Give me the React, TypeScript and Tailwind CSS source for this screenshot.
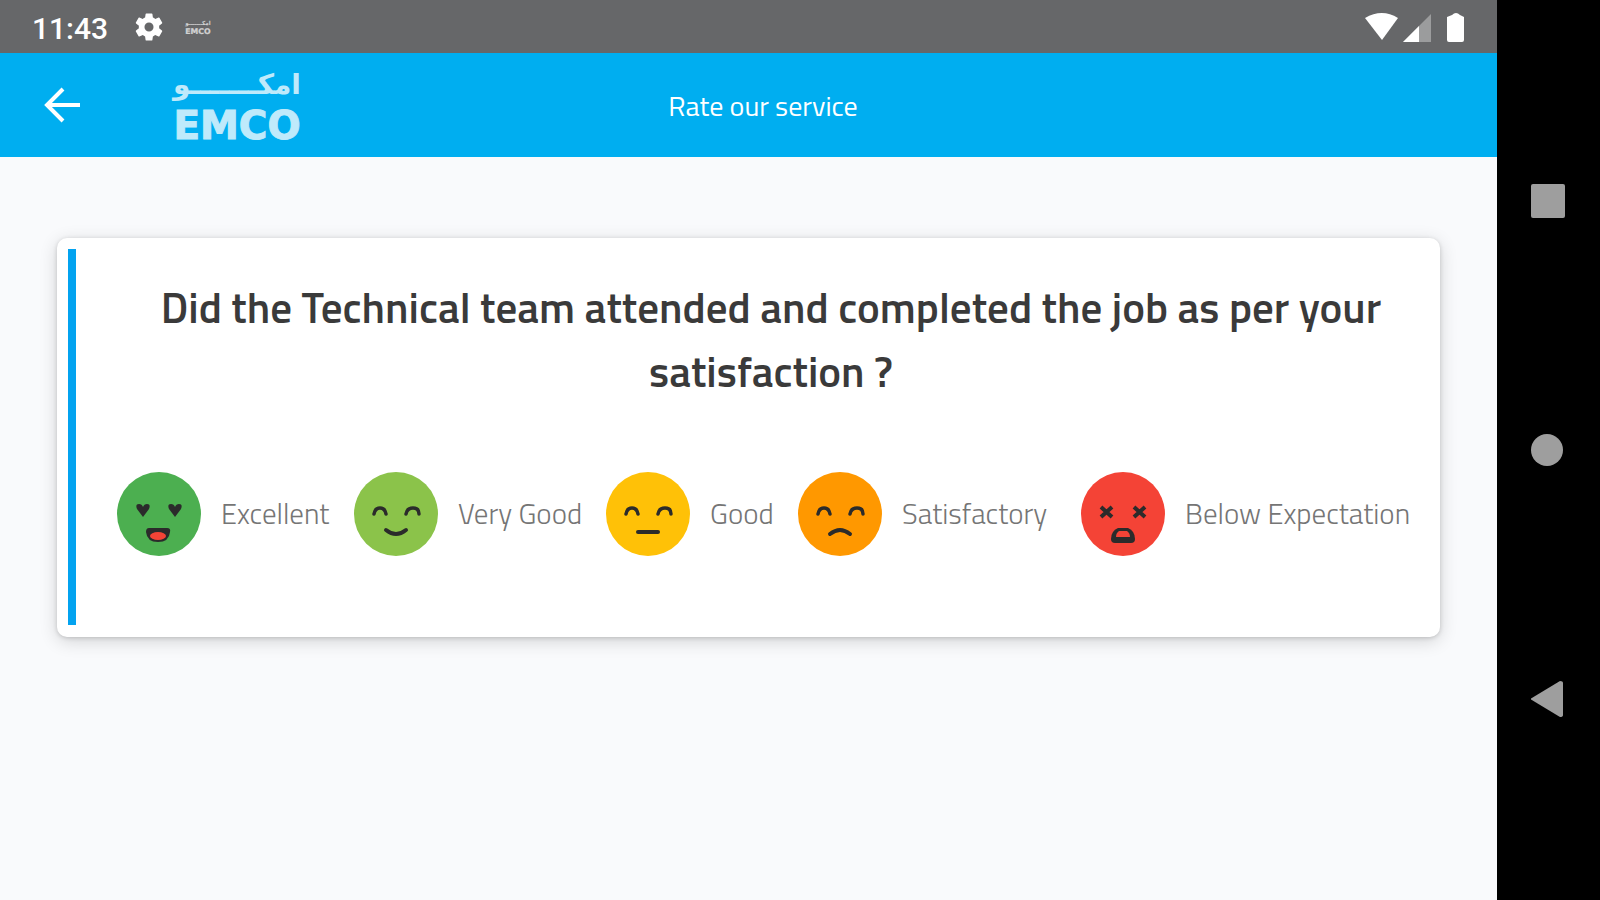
import type { ReactNode } from 'react';

const ink = '#2b2b2b';

function Logo({ className }: { className: string }) {
  return (
    <svg viewBox="0 0 136 90" className={className} role="img" aria-label="EMCO">
      <g fill="currentColor" fontWeight="700">
        <text
          x="68"
          y="34"
          textAnchor="middle"
          fontSize="28"
          fontFamily="'DejaVu Sans', sans-serif"
        >
          امكـــــــو
        </text>
        <text
          x="68"
          y="79"
          textAnchor="middle"
          fontSize="39"
          stroke="currentColor"
          fontFamily="'DejaVu Sans', sans-serif"
        >
          EMCO
        </text>
      </g>
    </svg>
  );
}

function StatusBar() {
  return (
    <div className="flex h-[53px] items-center justify-between bg-[#666769] px-[32px] text-white">
      <div className="flex items-center">
        <span className="pt-[4px] font-[Roboto] text-[30px] font-medium">11:43</span>
        <svg viewBox="0 0 24 24" className="ml-[24px] size-[34px]" fill="currentColor">
          <path d="M19.14 12.94c.04-.3.06-.61.06-.94 0-.32-.02-.64-.07-.94l2.03-1.58a.49.49 0 0 0 .12-.61l-1.92-3.32a.49.49 0 0 0-.59-.22l-2.39.96c-.5-.38-1.03-.7-1.62-.94l-.36-2.54a.48.48 0 0 0-.48-.41h-3.84c-.24 0-.43.17-.47.41l-.36 2.54c-.59.24-1.13.57-1.62.94l-2.39-.96a.48.48 0 0 0-.59.22L2.74 8.87c-.12.21-.08.47.12.61l2.03 1.58c-.05.3-.09.63-.09.94s.02.64.07.94l-2.03 1.58a.49.49 0 0 0-.12.61l1.92 3.32c.12.22.37.29.59.22l2.39-.96c.5.38 1.03.7 1.62.94l.36 2.54c.05.24.24.41.48.41h3.84c.24 0 .44-.17.47-.41l.36-2.54c.59-.24 1.13-.56 1.62-.94l2.39.96c.22.08.47 0 .59-.22l1.92-3.32a.48.48 0 0 0-.12-.61l-2.01-1.58zM12 15.2a3.2 3.2 0 1 1 0-6.4 3.2 3.2 0 0 1 0 6.4z" />
        </svg>
        <Logo className="ml-[18px] h-[18px] w-[28px] opacity-70" />
      </div>
      <svg viewBox="0 0 100 30" className="h-[30px] w-[100px]" fill="currentColor">
        <path d="M0 6Q17 -4 33 6L17 28Z" />
        <path d="M38 30L66 2V30Z" opacity="0.35" />
        <path d="M38 30L54 14V30Z" />
        <path d="M82 5L87 3Q91 -1 95 3L99 5V28Q99 30 97 30H84Q82 30 82 28Z" />
      </svg>
    </div>
  );
}

function Header() {
  return (
    <header className="grid h-[104px] grid-cols-[1fr_auto_1fr] items-center bg-[#00aef0] pl-[29px] text-white">
      <div className="flex items-center">
        <button type="button" aria-label="Back" className="ml-[14px]">
          <svg
            viewBox="0 0 38 36"
            className="h-[36px] w-[38px]"
            fill="none"
            stroke="currentColor"
            strokeWidth="4"
          >
            <path d="M20 2L4 18L20 34M4 18H37" />
          </svg>
        </button>
        <Logo className="ml-[88px] h-[90px] w-[136px] opacity-75" />
      </div>
      <h1 className="pt-[2px] text-[28px]">Rate our service</h1>
    </header>
  );
}

function Face({ color, children }: { color: string; children: ReactNode }) {
  return (
    <svg viewBox="0 0 84 84" className="size-[84px] shrink-0" aria-hidden="true">
      <circle cx="42" cy="42" r="42" fill={color} />
      <g fill="none" stroke={ink} strokeWidth="4" strokeLinecap="round">
        {children}
      </g>
    </svg>
  );
}

const happyEyes = (
  <path d="M20 42Q21 36 26 36T32 42M52 42Q53 36 59 36T65 42" strokeWidth="3.5" />
);

const options = [
  {
    label: 'Excellent',
    color: '#4caf50',
    face: (
      <>
        <g fill={ink} stroke="none">
          <path d="M26 45L20 37Q18 32 22 32Q25 32 26 35Q27 32 30 32Q34 32 32 37Z" />
          <path d="M58 45L52 37Q50 32 54 32Q57 32 58 35Q59 32 62 32Q66 32 64 37Z" />
          <path d="M32 56H50Q54 56 53 60Q52 70 41 70Q30 70 29 60Q29 56 32 56Z" />
        </g>
        <ellipse cx="41" cy="64" rx="8" ry="4" fill="#f44336" stroke="none" />
      </>
    ),
  },
  {
    label: 'Very Good',
    color: '#8bc34a',
    face: (
      <>
        {happyEyes}
        <path d="M32 58Q42 66 52 58" />
      </>
    ),
  },
  {
    label: 'Good',
    color: '#ffc107',
    face: (
      <>
        {happyEyes}
        <path d="M32 60H52" />
      </>
    ),
  },
  {
    label: 'Satisfactory',
    color: '#ff9800',
    face: (
      <>
        {happyEyes}
        <path d="M32 62Q42 54 52 62" />
      </>
    ),
  },
  {
    label: 'Below Expectation',
    color: '#f44336',
    face: (
      <>
        <path d="M20 35L31 45M31 35L20 45M53 35L64 45M64 35L53 45" strokeLinecap="butt" />
        <path
          d="M37 56H47Q54 59 54 67Q54 71 50 71H34Q30 71 30 67Q30 59 37 56Z"
          fill={ink}
          stroke="none"
        />
        <path d="M38 59H46Q49 61 49 65H35Q35 61 38 59Z" fill="#f44336" stroke="none" />
      </>
    ),
  },
];

function QuestionCard() {
  return (
    <section className="flex rounded-[10px] bg-white p-[11px] pb-[12px] shadow-[0_4px_18px_rgba(0,0,0,0.16),0_1px_4px_rgba(0,0,0,0.16)]">
      <div className="w-[8px] shrink-0 bg-[#03a3f0]" />
      <div className="flex-1 pt-[26px] pr-[16px] pb-[69px] pl-[41px]">
        <h2 className="pr-[24px] pl-[36px] text-center text-[43px] leading-[64px] font-semibold text-[#3a3a3a]">
          Did the Technical team attended and completed the job as per your satisfaction ?
        </h2>
        <div className="mt-[69px] grid grid-cols-[237fr_252fr_192fr_283fr_332fr]">
          {options.map((option) => (
            <button
              key={option.label}
              type="button"
              className="flex items-center gap-[20px] text-[29px] font-light whitespace-nowrap text-[#757575]"
            >
              <Face color={option.color}>{option.face}</Face>
              {option.label}
            </button>
          ))}
        </div>
      </div>
    </section>
  );
}

function NavBar() {
  return (
    <nav className="grid w-[103px] shrink-0 grid-rows-3 justify-items-center bg-black py-[76px] pr-[2px] text-[#9e9e9e]">
      <button type="button" aria-label="Recent apps">
        <svg viewBox="0 0 34 34" className="size-[34px]" fill="currentColor">
          <rect width="34" height="34" rx="2" />
        </svg>
      </button>
      <button type="button" aria-label="Home">
        <svg viewBox="0 0 34 34" className="size-[34px]" fill="currentColor">
          <circle cx="16" cy="17" r="16" />
        </svg>
      </button>
      <button type="button" aria-label="Back">
        <svg viewBox="0 0 34 36" className="h-[36px] w-[34px]" fill="currentColor">
          <path d="M-1 18L29 0Q32 0 32 2V34Q32 36 29 36Z" />
        </svg>
      </button>
    </nav>
  );
}

export default function App() {
  return (
    <div className="flex min-h-screen font-['Titillium_Web',Roboto,sans-serif]">
      <div className="flex-1 bg-[#f9fafc]">
        <StatusBar />
        <Header />
        <main className="px-[57px] pt-[81px]">
          <QuestionCard />
        </main>
      </div>
      <NavBar />
    </div>
  );
}
